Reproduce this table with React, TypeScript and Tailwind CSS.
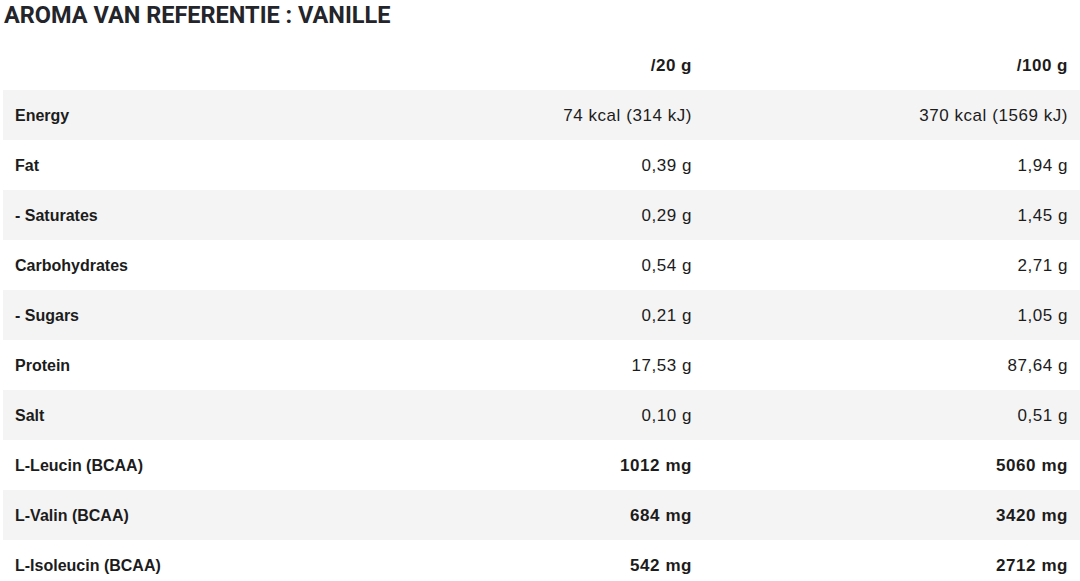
const rows: { label: string; a: string; b: string; strong?: boolean }[] = [
  { label: "Energy", a: "74 kcal (314 kJ)", b: "370 kcal (1569 kJ)" },
  { label: "Fat", a: "0,39 g", b: "1,94 g" },
  { label: "- Saturates", a: "0,29 g", b: "1,45 g" },
  { label: "Carbohydrates", a: "0,54 g", b: "2,71 g" },
  { label: "- Sugars", a: "0,21 g", b: "1,05 g" },
  { label: "Protein", a: "17,53 g", b: "87,64 g" },
  { label: "Salt", a: "0,10 g", b: "0,51 g" },
  { label: "L-Leucin (BCAA)", a: "1012 mg", b: "5060 mg", strong: true },
  { label: "L-Valin (BCAA)", a: "684 mg", b: "3420 mg", strong: true },
  { label: "L-Isoleucin (BCAA)", a: "542 mg", b: "2712 mg", strong: true },
];

export default function App() {
  return (
    <div className="w-[1080px] h-[581px] overflow-hidden bg-white text-[#1c1c1c] font-['Liberation_Sans',sans-serif]">
      <h2 className="h-[28px] pl-[4px] pt-[1px] text-[23.5px] leading-[28px] font-bold text-[#23252b] font-['Roboto',sans-serif]">
        AROMA VAN REFERENTIE : VANILLE
      </h2>

      <div className="mt-[12px] ml-[3px]">
        {/* header */}
        <div className="grid grid-cols-[1fr_376px_376px] h-[50px] items-center pt-[2px] text-[17px] tracking-[0.5px] font-bold">
          <div />
          <div className="text-right pr-[12px]">/20 g</div>
          <div className="text-right pr-[12px]">/100 g</div>
        </div>

        {rows.map((r, i) => (
          <div
            key={r.label}
            className={`grid grid-cols-[1fr_376px_376px] h-[50px] items-center pt-[2px] ${
              i % 2 === 0 ? "bg-[#f4f4f4]" : "bg-white"
            }`}
          >
            <div className="pl-[12px] text-[16px] font-bold">{r.label}</div>
            <div className={`text-right pr-[12px] text-[17px] tracking-[0.55px] ${r.strong ? "font-bold" : ""}`}>
              {r.a}
            </div>
            <div className={`text-right pr-[12px] text-[17px] tracking-[0.55px] ${r.strong ? "font-bold" : ""}`}>
              {r.b}
            </div>
          </div>
        ))}
      </div>
    </div>
  );
}
